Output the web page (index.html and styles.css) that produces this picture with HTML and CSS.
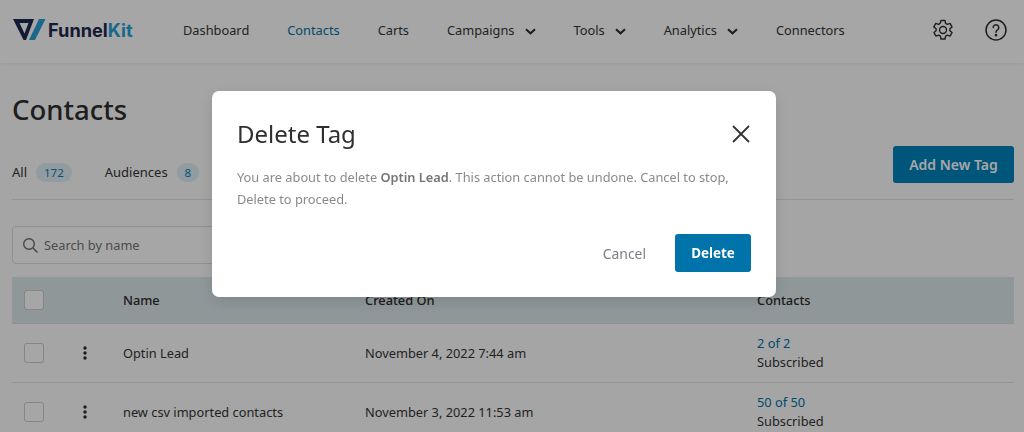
FILE: index.html
```html
<!DOCTYPE html>
<html lang="en">
<head>
<meta charset="utf-8">
<title>Contacts</title>
<link rel="stylesheet" href="styles.css">
</head>
<body>
<div class="app">
  <header class="topbar">
    <div class="logo">
      <svg class="logo-mark" width="34" height="23" viewBox="0 0 34 23"><path d="M1 1H22L14 22H11.500Z M7.500 5L12.500 15.500L16.500 5Z" fill="#1c2a4f" fill-rule="evenodd"/><path d="M27 1H33.500L23 22H17Z" fill="#2c9fd8"/></svg>
      <span class="logo-text">Funnel<span class="logo-kit">Kit</span></span>
    </div>
    <nav class="nav">
      <a class="nav-item">Dashboard</a>
      <a class="nav-item active">Contacts</a>
      <a class="nav-item">Carts</a>
      <a class="nav-item">Campaigns<svg class="chev" width="11" height="7" viewBox="0 0 11 7"><path d="M1 1.200L5.500 5.300L10 1.200" fill="none" stroke="#2b2b2b" stroke-width="2"/></svg></a>
      <a class="nav-item">Tools<svg class="chev" width="11" height="7" viewBox="0 0 11 7"><path d="M1 1.200L5.500 5.300L10 1.200" fill="none" stroke="#2b2b2b" stroke-width="2"/></svg></a>
      <a class="nav-item">Analytics<svg class="chev" width="11" height="7" viewBox="0 0 11 7"><path d="M1 1.200L5.500 5.300L10 1.200" fill="none" stroke="#2b2b2b" stroke-width="2"/></svg></a>
      <a class="nav-item">Connectors</a>
    </nav>
    <div class="top-icons">
      <svg width="24" height="24" viewBox="0 0 24 24" fill="none" stroke="#2f2f2f" stroke-width="1.400" stroke-linejoin="round"><path d="M10 2.500h4l.6 2.800 1.700 1 2.700-.9 2 3.500-2.100 1.900v1.900l2.100 1.900-2 3.500-2.700-.9-1.700 1-.6 2.800h-4l-.6-2.800-1.700-1-2.700.9-2-3.500 2.100-1.900v-1.900L2.800 8.900l2-3.500 2.700.9 1.700-1z"/><circle cx="12" cy="12" r="3.500"/></svg>
      <svg width="24" height="24" viewBox="0 0 24 24" fill="none" stroke="#2f2f2f" stroke-width="1.500"><circle cx="12" cy="12" r="10"/><path d="M9.200 9.500a2.800 2.800 0 1 1 4.300 2.400c-1 .6-1.500 1.200-1.500 2.300" stroke-linecap="round"/><circle cx="12" cy="17.200" r=".6" fill="#2f2f2f"/></svg>
    </div>
  </header>

  <main class="page">
    <h1 class="title">Contacts</h1>
    <div class="tabs">
      <span class="tab">All <span class="count">172</span></span>
      <span class="tab tab-aud">Audiences <span class="count">8</span></span>
      <button class="btn-add">Add New Tag</button>
    </div>
    <div class="search">
      <svg width="17" height="17" viewBox="0 0 17 17" fill="none" stroke="#6d6d6d" stroke-width="1.400"><circle cx="7" cy="7" r="5.300"/><path d="M11 11L15.500 15.500"/></svg>
      <span>Search by name</span>
    </div>
    <div class="table">
      <div class="row head">
        <span class="check"></span><span></span><span>Name</span><span>Created On</span><span>Contacts</span>
      </div>
      <div class="row">
        <span class="check"></span>
        <svg class="kebab" width="4" height="14" viewBox="0 0 4 14"><circle cx="2" cy="2" r="1.700"/><circle cx="2" cy="7" r="1.700"/><circle cx="2" cy="12" r="1.700"/></svg>
        <span>Optin Lead</span><span>November 4, 2022 7:44 am</span>
        <span class="stack"><a>2 of 2</a><span>Subscribed</span></span>
      </div>
      <div class="row">
        <span class="check"></span>
        <svg class="kebab" width="4" height="14" viewBox="0 0 4 14"><circle cx="2" cy="2" r="1.700"/><circle cx="2" cy="7" r="1.700"/><circle cx="2" cy="12" r="1.700"/></svg>
        <span>new csv imported contacts</span><span>November 3, 2022 11:53 am</span>
        <span class="stack"><a>50 of 50</a><span>Subscribed</span></span>
      </div>
    </div>
  </main>
</div>

<div class="overlay">
  <section class="modal">
    <div class="modal-head">
      <h2>Delete Tag</h2>
      <svg width="18" height="18" viewBox="0 0 18 18" fill="none" stroke="#333" stroke-width="1.800"><path d="M1 1L17 17M17 1L1 17"/></svg>
    </div>
    <p class="modal-text">You are about to delete <b>Optin Lead</b>. This action cannot be undone. Cancel to stop, Delete to proceed.</p>
    <div class="modal-foot">
      <span class="cancel">Cancel</span>
      <button class="btn-delete">Delete</button>
    </div>
  </section>
</div>
</body>
</html>
```
FILE: styles.css
```css
* { box-sizing: border-box; }
html, body { margin: 0; height: 100%; overflow: hidden; }
body { font-family: "Noto Sans", "Open Sans", sans-serif; font-size: 13px; color: #353535; background: #fdfdfd; }
.app { height: 432px; overflow: hidden; }

.topbar { height: 63px; background: #fff; display: flex; align-items: center; padding: 0 16px 4px 12px; box-shadow: 0 1px 3px rgba(0,0,0,.06); }
.logo { width: 171px; display: flex; align-items: center; gap: 2px; }
.logo-mark { flex: none; }
.logo-text { font-family: "Inter", "Noto Sans", sans-serif; font-weight: 700; font-size: 18.200px; color: #1c2a4f; }
.logo-kit { color: #2c9fd8; }
.nav { display: flex; align-items: center; gap: 38px; flex: 1; }
.nav-item { display: flex; align-items: center; gap: 10px; font-size: 12.800px; color: #353535; white-space: nowrap; }
.nav-item.active { color: #0073aa; }
.chev { margin-top: 3px; }
.top-icons { display: flex; align-items: center; gap: 29px; }

.page { padding: 0 10px 0 12px; }
.title { margin: 28px 0 0; font-size: 27.500px; line-height: 38px; font-weight: 500; color: #2e2e2e; }
.tabs { display: flex; align-items: center; height: 71px; padding-top: 16px; border-bottom: 1px solid #e2e2e2; }
.tab { display: flex; align-items: center; gap: 9px; color: #353535; font-size: 13px; }
.tab-aud { margin-left: 33px; }
.count { min-width: 22px; height: 19px; padding: 0 8px; border-radius: 10px; background: #e1eef5; color: #0083bd; font-size: 11.500px; line-height: 19px; text-align: center; }
.btn-add { margin-left: auto; width: 121px; height: 37px; margin-top: -15px; border: 0; border-radius: 3px; background: #0083bd; color: #fff; font: 600 14px "Noto Sans", sans-serif; }

.search { margin-top: 26px; width: 300px; height: 38px; border: 1px solid #ddd; border-radius: 4px; background: #fff; display: flex; align-items: center; gap: 5px; padding-left: 9px; color: #757575; font-size: 12.800px; }
.table { margin-top: 13px; }
.row { display: grid; grid-template-columns: 61px 38px 242px 392px 1fr; align-items: center; height: 59px; padding-left: 12px; border-bottom: 1px solid #e4e4e4; font-size: 12.800px; }
.row.head { height: 47px; background: #dce8ec; border-bottom-color: #d6dfe3; font-weight: 500; color: #2b2b2b; }
.check { width: 20px; height: 20px; border: 1.500px solid #cccccc; border-radius: 3px; background: #fff; }
.kebab { fill: #2d2d2d; margin-left: -2px; }
.stack { display: flex; flex-direction: column; line-height: 19px; }
.stack a { color: #0073aa; }

.overlay { position: fixed; inset: 0; background: rgba(0,0,0,.35); }
.modal { position: absolute; left: 212px; top: 91px; width: 564px; height: 206px; background: #fff; border-radius: 7px; padding: 24px 25px 25px; display: flex; flex-direction: column; box-shadow: 0 4px 16px rgba(0,0,0,.12); }
.modal-head { display: flex; align-items: center; justify-content: space-between; height: 38px; }
.modal-head h2 { margin: 0; font-size: 24px; font-weight: 400; color: #2f2f2f; line-height: 38px; }
.modal-head svg { margin-right: 1px; }
.modal-text { margin: 13px 0 0; font-size: 12.800px; line-height: 22px; color: #8a8a8a; }
.modal-text b { font-weight: 600; color: #757575; }
.modal-foot { margin-top: auto; display: flex; align-items: center; justify-content: flex-end; gap: 29px; }
.cancel { color: #7e8089; font-size: 13.900px; }
.btn-delete { width: 76px; height: 38px; border: 0; border-radius: 3px; background: #0073aa; color: #fff; font: 700 13.400px "Noto Sans", sans-serif; }
```
